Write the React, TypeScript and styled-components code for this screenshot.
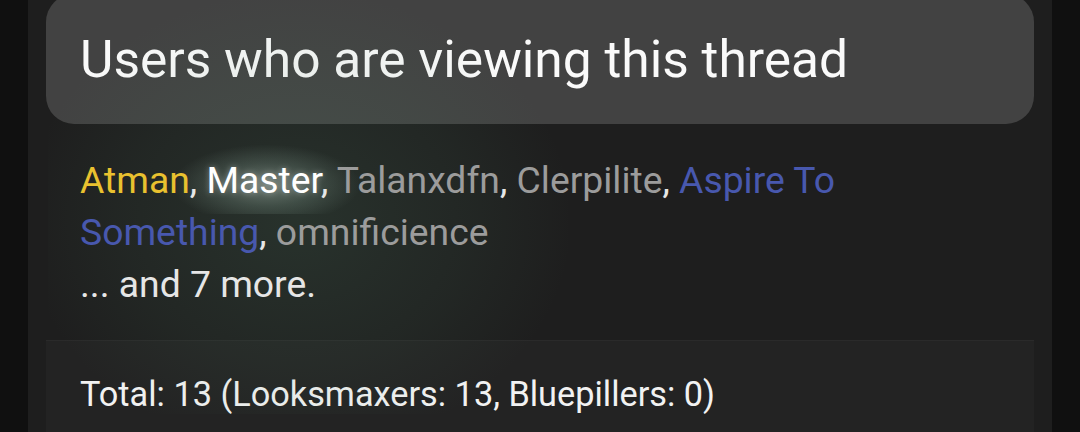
import styled, { createGlobalStyle } from "styled-components";

const GlobalStyle = createGlobalStyle`
  html, body {
    margin: 0;
    padding: 0;
    background: #101010;
    font-family: Roboto, "Noto Sans", "Liberation Sans", sans-serif;
    overflow: hidden;
  }
`;

const Page = styled.div`
  width: 1080px;
  height: 432px;
  padding: 0 28px;
  box-sizing: border-box;
  overflow: hidden;
`;

const Block = styled.div`
  position: relative;
  background: #1e1e1e;
  margin-top: -6px;
  padding: 0 18px 40px;
`;

// soft green haze that spills over the header and member list
const Haze = styled.div`
  position: absolute;
  left: 20px;
  top: 0;
  width: 520px;
  height: 420px;
  pointer-events: none;
  background: radial-gradient(ellipse at 48% 54%, rgba(90, 150, 115, 0.17) 0%, rgba(80, 130, 100, 0.09) 45%, rgba(30, 30, 30, 0) 72%);
`;

const Header = styled.h3`
  margin: 0;
  background: #424242;
  border-radius: 28px;
  padding: 36px 34px 34px;
  font-size: 51.5px;
  font-weight: 400;
  color: #fafafa;
  line-height: 60px;
`;

const Body = styled.div`
  position: relative;
  z-index: 0;
  padding: 30px 34px 30px;
  font-size: 37.3px;
  line-height: 52px;
  color: #e6e6e6;
`;

const User = styled.span<{ tone: string }>`
  color: ${(p) => p.tone};
`;

// highlighted name with a halo behind it
const Glow = styled.span`
  position: relative;
  color: #ffffff;
  text-shadow: 0 0 6px rgba(255, 255, 255, 0.35);
  &::before {
    content: "";
    position: absolute;
    left: -34px;
    right: -40px;
    top: -14px;
    bottom: -12px;
    z-index: -1;
    background: radial-gradient(ellipse at 50% 58%, rgba(200, 220, 208, 0.42) 0%, rgba(160, 190, 175, 0.2) 38%, rgba(40, 50, 45, 0) 70%);
  }
`;

const Footer = styled.div`
  background: #232323;
  border-top: 1px solid #2a2a2a;
  padding: 31px 34px 40px;
  font-size: 34.3px;
  line-height: 44px;
  color: #f2f2f2;
`;

const gray = "#9c9c9c";

const users = [
  { name: "Talanxdfn", tone: gray },
  { name: "Clerpilite", tone: gray },
];

export default function App() {
  return (
    <Page>
      <GlobalStyle />
      <Block>
        <Header>Users who are viewing this thread</Header>
        <Haze />
        <Body>
          <User tone="#e9c12f">Atman</User>, <Glow>Master</Glow>,{" "}
          {users.map((u) => (
            <span key={u.name}>
              <User tone={u.tone}>{u.name}</User>,{" "}
            </span>
          ))}
          <User tone="#4858ae">Aspire To Something</User>, <User tone={gray}>omnificience</User>
          <br />
          ... and 7 more.
        </Body>
        <Footer>Total: 13 (Looksmaxers: 13, Bluepillers: 0)</Footer>
      </Block>
    </Page>
  );
}
